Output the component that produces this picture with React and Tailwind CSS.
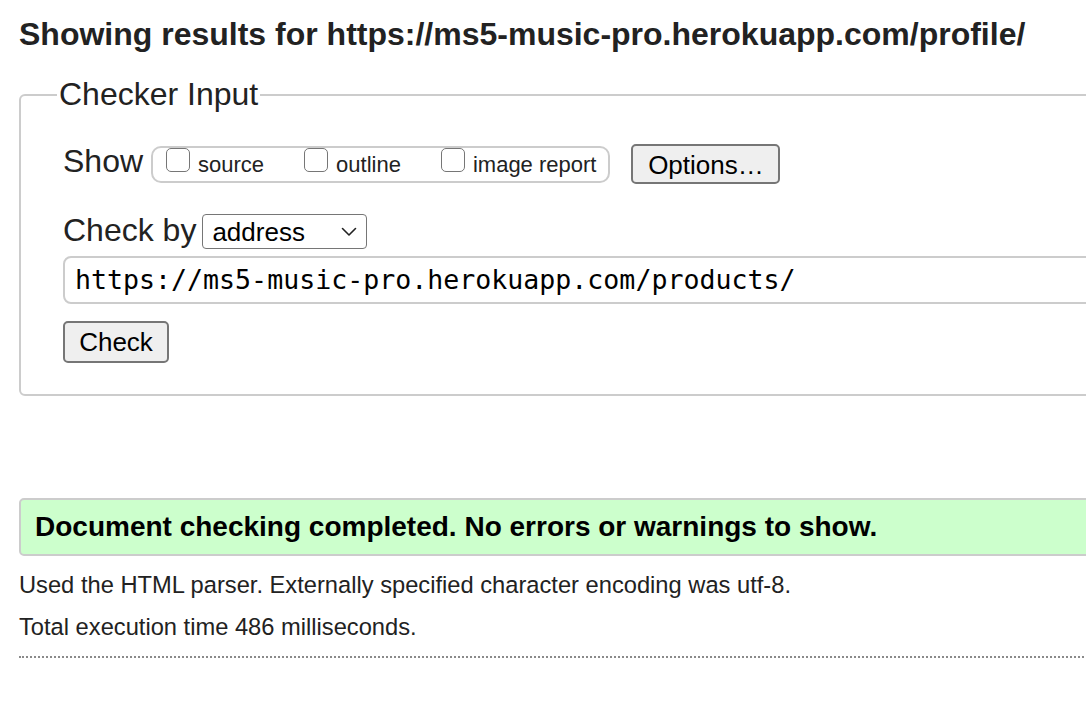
export default function App() {
    const options = [
        { label: "source", gap: "mr-[40px]" },
        { label: "outline", gap: "mr-[40px]" },
        { label: "image report", gap: "" },
    ];

    return (
        <div className="w-[1086px] h-[718px] overflow-hidden bg-white text-[#222] font-['Liberation_Sans',Arial,sans-serif]">
            <div className="w-[1140px] pl-[19px] pt-[16px]">
                <h2 className="text-[32px] font-bold leading-[37px] whitespace-nowrap">
                    Showing results for https://ms5-music-pro.herokuapp.com/profile/
                </h2>

                <fieldset className="mt-[23px] border-2 border-[#cccccc] rounded-[6px] pl-[42px] pr-[20px] pt-[31px] pb-[31px]">
                    <legend className="-ml-[6px] px-[2px] text-[32px] leading-[37px]">Checker Input</legend>

                    <div className="flex items-center h-[40px]">
                        <span className="text-[32px] leading-[37px] -mt-[5px]">Show</span>
                        <div className="flex items-start ml-[8px] h-[37px] pl-[13px] pr-[12px] border-2 border-[#cccccc] rounded-[10px]">
                            {options.map((o) => (
                                <label key={o.label} className={`flex items-start gap-[8px] ${o.gap}`}>
                                    <input type="checkbox" className="appearance-none w-[24px] h-[24px] border-[1.5px] border-[#767676] rounded-[5px] bg-white" />
                                    <span className="text-[22px] leading-[26px] mt-[4px] whitespace-nowrap">{o.label}</span>
                                </label>
                            ))}
                        </div>
                        <button className="ml-[21px] w-[149px] h-[40px] bg-[#efefef] border-2 border-[#767676] rounded-[5px] text-[26px] text-black">
                            Options…
                        </button>
                    </div>

                    <div className="flex items-center mt-[30px] h-[35px]">
                        <span className="text-[32px] leading-[37px] -mt-[2px]">Check by</span>
                        <div className="ml-[6px] w-[165px] h-[35px] flex items-center justify-between pl-[9px] pr-[9px] border-[1.5px] border-[#767676] rounded-[4px] bg-white">
                            <span className="text-[26px] leading-[30px] text-black">address</span>
                            <svg width="16" height="10" viewBox="0 0 16 10" fill="none">
                                <path d="M1.5 1.5 L8 8 L14.5 1.5" stroke="#222" strokeWidth="1.6" strokeLinecap="round" strokeLinejoin="round" />
                            </svg>
                        </div>
                    </div>

                    <div className="mt-[7px] h-[48px] flex items-center pl-[10px] border-2 border-[#cccccc] rounded-[8px]">
                        <span className="font-['DejaVu_Sans_Mono',monospace] text-[26.6px] leading-[30px] text-black whitespace-nowrap">
                            https://ms5-music-pro.herokuapp.com/products/
                        </span>
                    </div>

                    <button className="mt-[17px] w-[106px] h-[42px] bg-[#efefef] border-2 border-[#767676] rounded-[5px] text-[26px] text-black">
                        Check
                    </button>
                </fieldset>

                <div className="mt-[102px] h-[58px] flex items-center pl-[14px] bg-[#ccffcc] border-2 border-[#cccccc] rounded-[5px]">
                    <p className="text-[28px] font-bold text-black whitespace-nowrap">
                        Document checking completed. No errors or warnings to show.
                    </p>
                </div>

                <p className="mt-[14px] text-[23.7px] leading-[30px] whitespace-nowrap">
                    Used the HTML parser. Externally specified character encoding was utf-8.
                </p>
                <p className="mt-[12px] text-[23.7px] leading-[30px]">
                    Total execution time 486 milliseconds.
                </p>
                <div className="mt-[14px] border-t-2 border-dotted border-[#8a8a8a]" />
            </div>
        </div>
    );
}
